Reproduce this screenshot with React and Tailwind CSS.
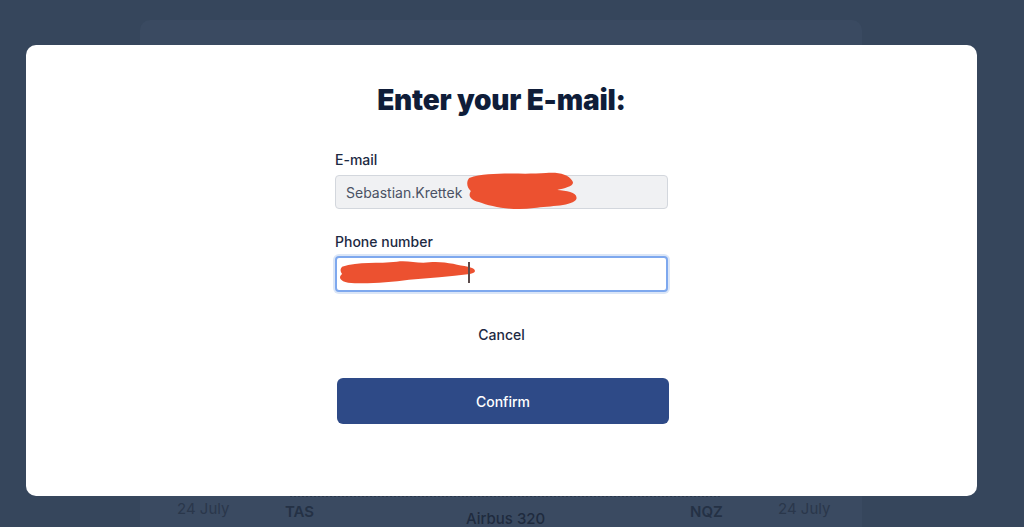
import React from "react";

function Scribble({ className, d }) {
    return (
        <svg className={className} viewBox="0 0 140 40" preserveAspectRatio="none" fill="#ec5130">
            <path d={d} />
        </svg>
    );
}

export default function App() {
    return (
        <div className="relative h-[527px] w-[1024px] overflow-hidden bg-[#36465c]" style={{ fontFamily: "Inter, 'Open Sans', sans-serif" }}>
            {/* page behind the modal */}
            <div className="ml-[140px] mt-[20px] h-[600px] w-[722px] rounded-[10px] bg-[#3a4a61] pt-[475px]">
                <div className="ml-[150px] w-[430px] border-t-2 border-dotted border-[#2a384c]" />
                <div className="flex items-start pl-[37px] pt-[2px] text-[15px] leading-[20px] text-[#2a374b]">
                    <span className="w-[108px]">24 July</span>
                    <span className="w-[181px] pt-[3px] font-semibold text-[#243145]">TAS</span>
                    <span className="w-[224px] pt-[10px] font-medium text-[#1f2b3e]">Airbus 320</span>
                    <span className="w-[88px] pt-[3px] font-semibold text-[#243145]">NQZ</span>
                    <span>24 July</span>
                </div>
            </div>

            {/* modal */}
            <div className="absolute left-[26px] top-[45px] h-[451px] w-[951px] rounded-[10px] bg-white pt-[37px]">
                <h1 className="text-center text-[28px] leading-[36px] font-black tracking-[-0.2px] text-[#0f1d39]">
                    Enter your E-mail:
                </h1>
                <div className="mx-auto mt-[32px] w-[333px]">
                    <label className="block text-[14px] leading-[20px] font-medium text-[#1c2942]">E-mail</label>
                    <div className="relative mt-[5px] flex h-[34px] items-center rounded-[4px] border border-[#d3d7dd] bg-[#f0f1f3] px-[10px] text-[14px] text-[#4a5264]">
                        Sebastian.Krettek
                        <Scribble
                            className="absolute left-[130px] top-[-5px] h-[40px] w-[112px]"
                            d="M4 7 C30 0 70 4 100 2 C115 1 128 3 133 10 C137 15 124 17 114 19 C126 20 140 21 138 28 C134 35 105 35 85 37 C60 40 32 36 16 31 C6 29 2 25 6 20 C1 16 0 11 4 7 Z"
                        />
                    </div>

                    <label className="mt-[23px] block text-[14px] leading-[20px] font-medium text-[#1c2942]">Phone number</label>
                    <div className="relative mt-[4px] h-[36px] rounded-[4px] border-2 border-[#7ea8ee] bg-white ring-2 ring-[#dbe6f7]">
                        <Scribble
                            className="absolute left-[1px] top-[0px] h-[29px] w-[142px]"
                            d="M4 12 C20 4 40 8 58 5 C70 3 78 8 90 6 C105 4 118 10 128 12 C136 14 138 20 130 22 C110 26 90 27 70 30 C50 34 25 36 10 34 C2 32 0 26 4 22 C2 18 2 15 4 12 Z"
                        />
                        <span className="absolute left-[131px] top-[4px] h-[21px] w-[2px] bg-[#5a4a4a]" />
                    </div>

                    <div className="mt-[33px] text-center text-[14px] leading-[20px] font-medium text-[#1c2942]">Cancel</div>

                    <button className="mt-[33px] ml-[2px] h-[46px] w-[332px] rounded-[6px] bg-[#2e4a87] text-[14px] font-medium text-white">
                        Confirm
                    </button>
                </div>
            </div>
        </div>
    );
}
